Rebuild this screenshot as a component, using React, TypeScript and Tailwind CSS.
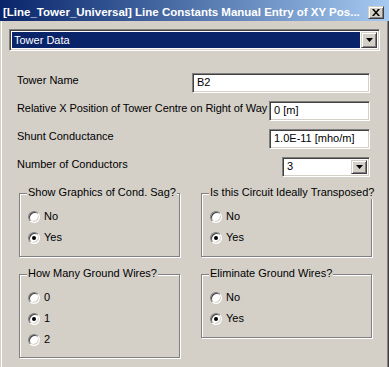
import React from "react";

const sunken =
  "border border-t-[#808080] border-l-[#808080] border-b-white border-r-white shadow-[inset_1px_1px_0_#404040,inset_-1px_-1px_0_#d4d0c8] bg-white";
const raised =
  "bg-[#d4d0c8] border border-t-[#d4d0c8] border-l-[#d4d0c8] border-b-[#404040] border-r-[#404040] shadow-[inset_1px_1px_0_#ffffff,inset_-1px_-1px_0_#808080]";

function Arrow() {
  return (
    <svg width="7" height="4" viewBox="0 0 7 4">
      <path d="M0 0h7L3.5 4z" fill="#000" />
    </svg>
  );
}

function Radio({ label, checked }: { label: string; checked?: boolean }) {
  return (
    <div className="h-[21px] flex items-center gap-[4px]">
      <span
        className={
          "w-[12px] h-[12px] rounded-full flex items-center justify-center " +
          sunken
        }
      >
        {checked && <span className="w-[4px] h-[4px] rounded-full bg-black" />}
      </span>
      <span className="leading-[13px]">{label}</span>
    </div>
  );
}

function Group({
  title,
  height,
  children,
}: {
  title: string;
  height: string;
  children: React.ReactNode;
}) {
  return (
    <div
      className={
        "relative border border-[#808080] shadow-[1px_1px_0_#ffffff,inset_1px_1px_0_#ffffff] pt-[12px] pl-[8px] " +
        height
      }
    >
      <span className="absolute -top-[8px] left-[7px] px-[1px] bg-[#d4d0c8] leading-[13px] whitespace-nowrap">
        {title}
      </span>
      {children}
    </div>
  );
}

function Row({
  label,
  tight,
  children,
}: {
  label: string;
  tight?: boolean;
  children: React.ReactNode;
}) {
  return (
    <div className="h-[28px] flex items-center pl-[17px] pr-[19px]">
      <span
        className={
          "whitespace-nowrap leading-[13px] " + (tight ? "tracking-[-0.07px]" : "")
        }
      >
        {label}
      </span>
      <div className="ml-auto mt-[5px]">{children}</div>
    </div>
  );
}

function Field({ value, width }: { value: string; width: string }) {
  return (
    <div
      className={
        "h-[20px] flex items-center pl-[4px] leading-[13px] " + sunken + " " + width
      }
    >
      {value}
    </div>
  );
}

export default function App() {
  return (
    <div className="w-[389px] h-[367px] overflow-hidden bg-[#d4d0c8] flex flex-col text-[11px] text-black font-['Liberation_Sans',Arial,sans-serif] shadow-[inset_1px_0_0_#d4d0c8,inset_2px_0_0_#ffffff,inset_-1px_0_0_#404040,inset_-2px_0_0_#808080]">
      {/* Title bar */}
      <div className="h-[21px] flex items-center pt-[3px] pl-[3px] pr-[5px] bg-gradient-to-r from-[#0a246a] to-[#a6caf0]">
        <span className="text-white font-bold text-[11.5px] whitespace-nowrap flex-1 leading-[14px] overflow-hidden">
          [Line_Tower_Universal] Line Constants Manual Entry of XY Pos...
        </span>
        <div
          className={
            "w-[16px] h-[13px] ml-[2px] flex items-center justify-center " + raised
          }
        >
          <svg width="8" height="7" viewBox="0 0 8 7">
            <path d="M0 0h2l2 2.5L6 0h2L5 3.5 8 7H6L4 4.5 2 7H0l3-3.5z" fill="#000" />
          </svg>
        </div>
      </div>

      {/* Top dropdown */}
      <div
        className={
          "mt-[8px] ml-[9px] w-[371px] h-[22px] flex items-center p-[2px] " + sunken
        }
      >
        <div className="flex-1 h-full bg-[#0a246a] text-white flex items-center pl-[2px] leading-[13px] mr-[1px]">
          Tower Data
        </div>
        <div className={"w-[16px] h-full flex items-center justify-center " + raised}>
          <Arrow />
        </div>
      </div>

      {/* Rows */}
      <div className="mt-[15px] flex flex-col">
        <Row label="Tower Name">
          <Field value="B2" width="w-[178px]" />
        </Row>
        <Row label="Relative X Position of Tower Centre on Right of Way" tight>
          <Field value="0 [m]" width="w-[101px]" />
        </Row>
        <Row label="Shunt Conductance">
          <Field value="1.0E-11 [mho/m]" width="w-[101px]" />
        </Row>
        <Row label="Number of Conductors">
          <div
            className={
              "w-[88px] h-[20px] flex items-center p-[2px] leading-[13px] " + sunken
            }
          >
            <span className="flex-1 pl-[2px]">3</span>
            <div className={"w-[16px] h-full flex items-center justify-center " + raised}>
              <Arrow />
            </div>
          </div>
        </Row>
      </div>

      {/* Groups */}
      <div className="mt-[15px] ml-[19px] grid grid-cols-[161px_171px] gap-x-[21px] gap-y-[17px] items-start">
        <Group title="Show Graphics of Cond. Sag?" height="h-[64px]">
          <Radio label="No" />
          <Radio label="Yes" checked />
        </Group>
        <Group title="Is this Circuit Ideally Transposed?" height="h-[64px]">
          <Radio label="No" />
          <Radio label="Yes" checked />
        </Group>
        <Group title="How Many Ground Wires?" height="h-[84px]">
          <Radio label="0" />
          <Radio label="1" checked />
          <Radio label="2" />
        </Group>
        <Group title="Eliminate Ground Wires?" height="h-[64px]">
          <Radio label="No" />
          <Radio label="Yes" checked />
        </Group>
      </div>
    </div>
  );
}
